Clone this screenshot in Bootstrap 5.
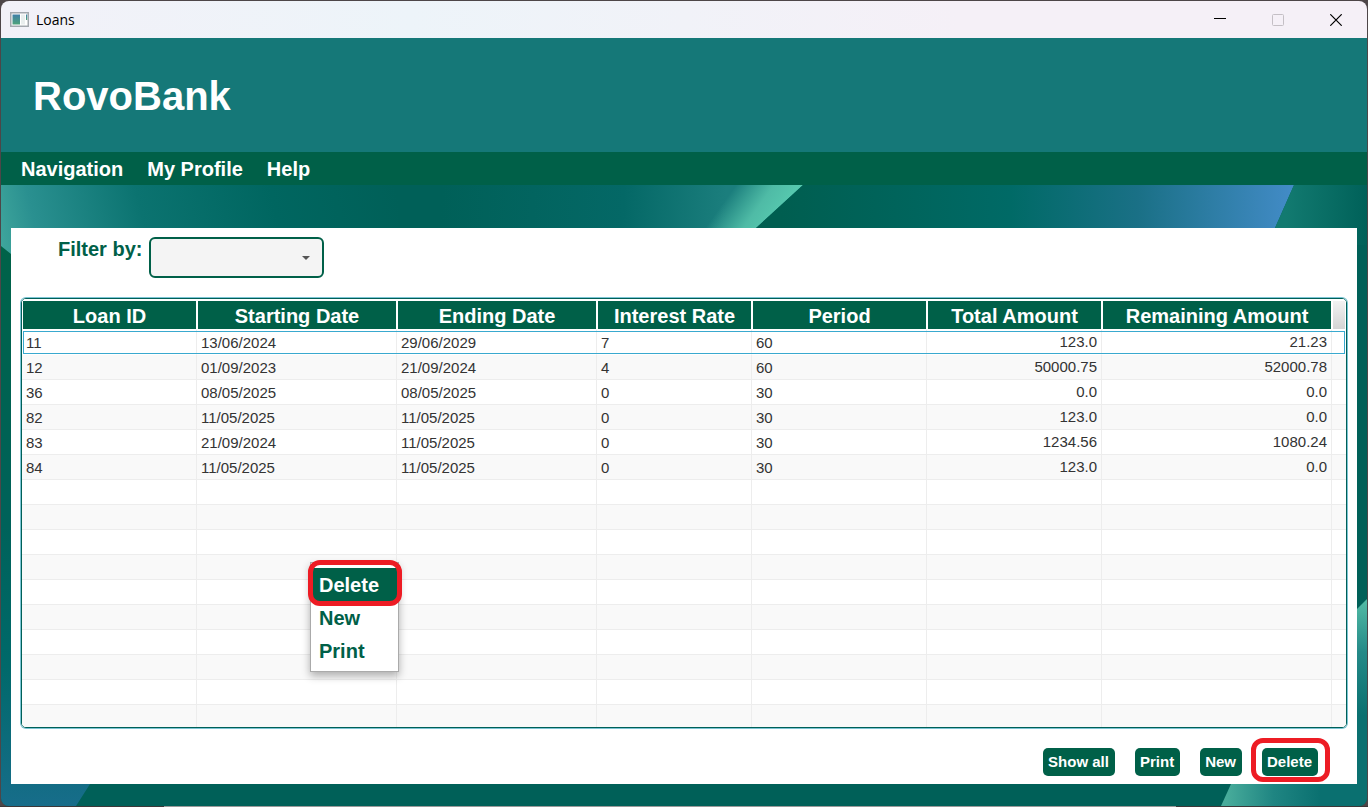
<!DOCTYPE html>
<html lang="en">
<head>
<meta charset="utf-8">
<meta name="viewport" content="width=device-width, initial-scale=1">
<title>Loans</title>
<link href="https://cdn.jsdelivr.net/npm/bootstrap@5.3.0/dist/css/bootstrap.min.css" rel="stylesheet">
<style>
  :root { --brand: #006048; --banner: #157878; --ring: #ed1c24; }
  body {
    font-family: "Liberation Sans", Arial, sans-serif;
    background: linear-gradient(90deg, #3c3838 12%, #9a9a9a 12%, #9a9a9a 86%, #3c3838 86%) bottom / 100% 1px no-repeat #4d4648;
  }
  .app-window { min-height: 100vh; padding: 1px; }
  .app-frame { border-radius: 8px; overflow: hidden; }
  .title-bar { height: 37px; padding: 0 2px 0 9px; background: linear-gradient(90deg, #f2f1f8, #edf4f9 30%, #f5f0f7 70%); }
  .title-text { font: 14px/20px "Open Sans", "Noto Sans", sans-serif; color: #000; margin-left: 7px; }
  .win-btn { width: 58px; height: 36px; background: none; border: 0; padding: 0; }
  .brand-banner { height: 114px; background: var(--banner); padding: 2px 32px 0; }
  .brand-banner h1 { font-size: 40px; line-height: 48px; font-weight: 700; }
  .menu-strip { background: var(--brand); height: 33px; padding-left: 8px; }
  .menu-strip .nav-link { color: #fff; font-size: 20px; line-height: 35px; font-weight: 700; padding: 0 12px; }
  .stage { padding: 43px 10px 22px; }
  .backdrop { inset: 0; z-index: 0; }
  .loan-panel { background: #fff; z-index: 1; padding: 9px 10px 8px; }
  .filter-row { padding-left: 37px; gap: 7px; margin-bottom: 20px; }
  .filter-row label { color: var(--brand); font-size: 20px; line-height: 24px; font-weight: 700; }
  .filter-select {
    width: 175px; height: 41px; border: 2px solid var(--brand); border-radius: 6px; padding: 0 24px 0 8px;
    background: #f4f4f4 url("data:image/svg+xml,%3Csvg xmlns='http://www.w3.org/2000/svg' viewBox='0 0 8 4'%3E%3Cpath fill='%23555' d='M0 0h8L4 4z'/%3E%3C/svg%3E") right 12px center / 8px 4px no-repeat;
  }
  .grid-wrap { flex: 1 1 0; min-height: 260px; }
  .grid-box { border: 1px solid #006058; border-radius: 5px; box-shadow: 0 0 0 1px #7cc4d4; overflow: hidden; }
  .loan-grid { table-layout: fixed; width: 100%; border-collapse: separate; border-spacing: 0; color: #333; font-size: 15px; line-height: 22px; }
  .loan-grid th {
    height: 31px; background: var(--brand) padding-box; color: #fff; font-size: 20px; line-height: 26px; font-weight: 700;
    text-align: center; padding: 2px 0 0; white-space: nowrap; border: 1px solid #fff; border-top-width: 2px;
  }
  .loan-grid .grid-corner { background: linear-gradient(#f2f2f2, #d4d4d4) padding-box; }
  .loan-grid td { height: 25px; padding: 2px 4px 0; border: solid #ededed; border-width: 0 1px 1px 0; }
  .loan-grid td.text-end { padding: 1px 4px; }
  .loan-grid tbody tr:nth-child(even) td { background: #f9f9f9; }
  .loan-grid td:last-child { border-right: 0; }
  .loan-grid .focused-row { position: relative; }
  .loan-grid .focused-row td { border-bottom-color: #fff; }
  .focused-row td:first-child::after { content: ""; position: absolute; inset: 1px; border: 1px solid #39a9cf; pointer-events: none; }
  .context-menu {
    left: 289px; top: 264px; width: 89px; min-width: 0; padding: 5px 0 4px; border: 1px solid #aaa; border-radius: 0;
    box-shadow: 0 4px 8px rgba(0,0,0,.3); --bs-dropdown-link-active-bg: var(--brand);
  }
  .context-menu .dropdown-item { color: var(--brand); font-size: 20px; line-height: 31px; font-weight: 700; padding: 2px 8px 0; }
  .context-menu .dropdown-item.active { color: #fff; }
  .ringed { position: relative; }
  .ringed::after { content: ""; position: absolute; border: 5px solid var(--ring); border-radius: 12px; pointer-events: none; }
  .dropdown-item.ringed::after { inset: -8px -4px -5px -3px; }
  .btn.ringed::after { inset: -10px -12px -6px -11px; }
  .action-row { gap: 20px; padding: 20px 29px 0 0; }
  .action-btn {
    --bs-btn-bg: var(--brand); --bs-btn-color: #fff; --bs-btn-hover-bg: #004c39; --bs-btn-hover-color: #fff;
    font-size: 15px; line-height: 28px; font-weight: 700; padding: 0 6px 0 5px; border: 0; border-radius: 5px;
  }
</style>
</head>
<body>
<div class="app-window d-flex flex-column">
<div class="app-frame d-flex flex-column flex-grow-1">
  <header class="title-bar d-flex align-items-center">
    <svg width="19" height="15" viewBox="0 0 19 15" aria-hidden="true">
      <defs><linearGradient id="ico" x2="0" y2="1"><stop stop-color="#3f7fa8"/><stop offset="1" stop-color="#4fa37a"/></linearGradient></defs>
      <rect x=".75" y=".75" width="17.5" height="13.5" fill="#fff" stroke="#a3a8ae" stroke-width="1.5"/>
      <path fill="url(#ico)" d="M2.5 2.5h7.5v10H2.5z"/><path fill="#e9eeee" d="M11 2.5h4v10h-4z"/><path fill="url(#ico)" d="M16 2.5h1.2V8H16z"/>
    </svg>
    <span class="title-text">Loans</span>
    <div class="ms-auto d-flex">
      <button class="win-btn" type="button" aria-label="Minimize"><svg width="12" height="12" viewBox="0 0 12 12"><path d="M0 4.5h12" stroke="#000"/></svg></button>
      <button class="win-btn" type="button" aria-label="Maximize" disabled><svg width="12" height="12" viewBox="0 0 12 12"><rect x=".5" y=".5" width="11" height="11" rx="1" fill="none" stroke="#c4bfc5"/></svg></button>
      <button class="win-btn" type="button" aria-label="Close"><svg width="12" height="12" viewBox="0 0 12 12"><path d="M.3.3l11.4 11.4M11.7.3L.3 11.7" stroke="#000" stroke-width="1.2"/></svg></button>
    </div>
  </header>
  <div class="brand-banner d-flex align-items-center"><h1 class="m-0 text-white">RovoBank</h1></div>
  <nav class="menu-strip nav">
    <a class="nav-link" href="#">Navigation</a>
    <a class="nav-link" href="#">My Profile</a>
    <a class="nav-link" href="#">Help</a>
  </nav>
  <main class="stage position-relative d-flex flex-column flex-grow-1">
    <svg class="backdrop position-absolute w-100 h-100" viewBox="0 0 1366 621" preserveAspectRatio="none" aria-hidden="true">
      <defs>
        <linearGradient id="g1" gradientUnits="userSpaceOnUse" x1="-10" y1="70" x2="390" y2="-20"><stop stop-color="#45aca0"/><stop offset=".12" stop-color="#2a9090"/><stop offset=".38" stop-color="#0b7370"/><stop offset=".7" stop-color="#006660"/><stop offset="1" stop-color="#006058"/></linearGradient>
        <linearGradient id="g2" gradientUnits="userSpaceOnUse" x1="380" y1="0" x2="785" y2="22"><stop stop-color="#006058"/><stop offset=".15" stop-color="#006058"/><stop offset=".6" stop-color="#046866"/><stop offset=".85" stop-color="#1b7e7d"/></linearGradient>
        <linearGradient id="g3" gradientUnits="userSpaceOnUse" x1="735" y1="0" x2="777" y2="30"><stop stop-color="#52c0a8" stop-opacity="0"/><stop offset=".6" stop-color="#4fbba6"/><stop offset="1" stop-color="#56c8ae"/></linearGradient>
        <linearGradient id="g4" gradientUnits="userSpaceOnUse" x1="780" y1="0" x2="1290" y2="0"><stop stop-color="#005e50"/><stop offset=".45" stop-color="#006a66"/><stop offset=".7" stop-color="#1a7086"/><stop offset="1" stop-color="#428bc6"/></linearGradient>
        <linearGradient id="g5" gradientUnits="userSpaceOnUse" x1="1285" y1="0" x2="1366" y2="0"><stop stop-color="#127a70"/><stop offset="1" stop-color="#006159"/></linearGradient>
        <linearGradient id="g6" x2="0" y2="1"><stop stop-color="#006248"/><stop offset=".5" stop-color="#00625a"/><stop offset=".75" stop-color="#00696a"/><stop offset="1" stop-color="#176d8a"/></linearGradient>
        <linearGradient id="g7" gradientUnits="userSpaceOnUse" x1="1225" y1="0" x2="1320" y2="0"><stop stop-color="#48ac9b"/><stop offset=".5" stop-color="#1f8582"/><stop offset="1" stop-color="#0a7070"/></linearGradient>
        <linearGradient id="g8" gradientUnits="userSpaceOnUse" x1="0" y1="415" x2="0" y2="530"><stop stop-color="#52bba5"/><stop offset=".45" stop-color="#258a88"/><stop offset="1" stop-color="#0a7070"/></linearGradient>
      </defs>
      <path fill="#006058" d="M0 0h1366v621H0z"/>
      <path fill="url(#g1)" d="M0 0h400v70H0z"/>
      <path fill="url(#g2)" d="M398 0h404L755 43H398z"/>
      <path fill="url(#g3)" d="M720 0h82L755 43h-60z"/>
      <path fill="url(#g4)" d="M802 0h491l-19 43H755z"/>
      <path fill="url(#g5)" d="M1293 0h73v60h-92V43z"/>
      <path fill="url(#g6)" d="M0 61l10 8v530h79l-14 22H0z"/>
      <path fill="url(#g7)" d="M1230 599h136v22h-146z"/>
      <path fill="url(#g8)" d="M1356 424l10-10v185h-10z"/>
    </svg>
    <section class="loan-panel position-relative d-flex flex-column flex-grow-1">
      <div class="filter-row d-flex align-items-start">
        <label for="filterBy">Filter by:</label>
        <select id="filterBy" class="filter-select form-select"><option></option></select>
      </div>
      <div class="grid-wrap position-relative d-flex">
        <div class="grid-box position-relative flex-grow-1">
          <div class="position-absolute w-100">
          <table class="loan-grid">
            <colgroup><col style="width:175px"><col style="width:200px"><col style="width:200px"><col style="width:155px"><col style="width:175px"><col style="width:175px"><col style="width:230px"><col></colgroup>
            <thead><tr><th scope="col">Loan ID</th><th scope="col">Starting Date</th><th scope="col">Ending Date</th><th scope="col">Interest Rate</th><th scope="col">Period</th><th scope="col">Total Amount</th><th scope="col">Remaining Amount</th><th class="grid-corner"></th></tr></thead>
            <tbody>
              <tr class="focused-row"><td>11</td><td>13/06/2024</td><td>29/06/2029</td><td>7</td><td>60</td><td class="text-end">123.0</td><td class="text-end">21.23</td><td></td></tr>
              <tr><td>12</td><td>01/09/2023</td><td>21/09/2024</td><td>4</td><td>60</td><td class="text-end">50000.75</td><td class="text-end">52000.78</td><td></td></tr>
              <tr><td>36</td><td>08/05/2025</td><td>08/05/2025</td><td>0</td><td>30</td><td class="text-end">0.0</td><td class="text-end">0.0</td><td></td></tr>
              <tr><td>82</td><td>11/05/2025</td><td>11/05/2025</td><td>0</td><td>30</td><td class="text-end">123.0</td><td class="text-end">0.0</td><td></td></tr>
              <tr><td>83</td><td>21/09/2024</td><td>11/05/2025</td><td>0</td><td>30</td><td class="text-end">1234.56</td><td class="text-end">1080.24</td><td></td></tr>
              <tr><td>84</td><td>11/05/2025</td><td>11/05/2025</td><td>0</td><td>30</td><td class="text-end">123.0</td><td class="text-end">0.0</td><td></td></tr>
              <tr><td></td><td></td><td></td><td></td><td></td><td></td><td></td><td></td></tr>
              <tr><td></td><td></td><td></td><td></td><td></td><td></td><td></td><td></td></tr>
              <tr><td></td><td></td><td></td><td></td><td></td><td></td><td></td><td></td></tr>
              <tr><td></td><td></td><td></td><td></td><td></td><td></td><td></td><td></td></tr>
              <tr><td></td><td></td><td></td><td></td><td></td><td></td><td></td><td></td></tr>
              <tr><td></td><td></td><td></td><td></td><td></td><td></td><td></td><td></td></tr>
              <tr><td></td><td></td><td></td><td></td><td></td><td></td><td></td><td></td></tr>
              <tr><td></td><td></td><td></td><td></td><td></td><td></td><td></td><td></td></tr>
              <tr><td></td><td></td><td></td><td></td><td></td><td></td><td></td><td></td></tr>
              <tr><td></td><td></td><td></td><td></td><td></td><td></td><td></td><td></td></tr>
            </tbody>
          </table>
          </div>
        </div>
        <div class="context-menu dropdown-menu show">
          <button class="dropdown-item active ringed" type="button">Delete</button>
          <button class="dropdown-item" type="button">New</button>
          <button class="dropdown-item" type="button">Print</button>
        </div>
      </div>
      <div class="action-row d-flex justify-content-end">
        <button class="btn action-btn" type="button">Show all</button>
        <button class="btn action-btn" type="button">Print</button>
        <button class="btn action-btn" type="button">New</button>
        <button class="btn action-btn ringed" type="button">Delete</button>
      </div>
    </section>
  </main>
</div>
</div>
<script src="https://cdn.jsdelivr.net/npm/bootstrap@5.3.0/dist/js/bootstrap.bundle.min.js"></script>
</body>
</html>
